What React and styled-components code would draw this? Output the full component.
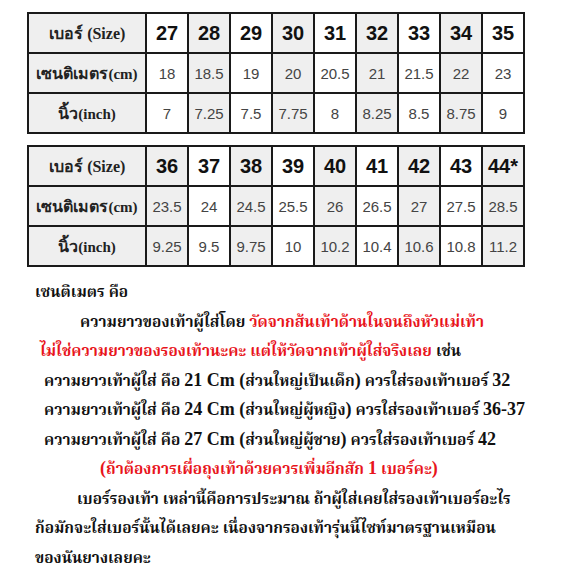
import React from "react";
import styled, { createGlobalStyle } from "styled-components";

const Global = createGlobalStyle`
  html, body { margin: 0; padding: 0; background: #fff; }
  body { width: 570px; height: 570px; overflow: hidden; }
`;

const Page = styled.div`
  padding: 12px 0 0 27px;
  display: flex;
  flex-direction: column;
`;

const Table = styled.table`
  width: 498px;
  border-collapse: collapse;
  table-layout: fixed;
  border: 2px solid #1a1a1a;
  margin-bottom: ${(p) => p.$gap || 0}px;
`;

const Row = styled.tr`
  height: 40px;
`;

const Cell = styled.td`
  border: 2px solid #1a1a1a;
  background: ${(p) => (p.$shade ? "#efefef" : "#ffffff")};
  text-align: center;
  padding: 0;
  color: #444;
  font-family: "Liberation Sans", Arial, sans-serif;
  font-size: 15px;
`;

const HeadCell = styled(Cell)`
  color: #111;
  font-weight: bold;
  font-size: 20px;
`;

const Label = styled(Cell)`
  background: #efefef;
  color: #222;
  font-weight: bold;
  font-size: 16px;
  font-family: "Liberation Sans", Tahoma, sans-serif;
  white-space: nowrap;
`;

const Latin = styled.span`
  font-family: "Liberation Serif", serif;
  font-size: ${(p) => p.$size || 15}px;
`;

const Text = styled.div`
  margin-top: 12px;
  font-family: "Noto Serif Thai", "Norasi", "Tlwg Typo", "Liberation Serif", "Times New Roman", serif;
  font-weight: bold;
  font-size: 15.4px;
  color: #111;
`;

const Line = styled.div`
  height: 29.5px;
  line-height: 29.5px;
  padding-left: ${(p) => p.$indent || 0}px;
  white-space: nowrap;
`;

const Roman = styled.span`
  font-family: "Liberation Serif", "Times New Roman", serif;
  font-size: 18px;
  line-height: 1;
`;

const Red = styled.span`
  color: #e8141b;
`;

const tables = [
  {
    sizes: ["27", "28", "29", "30", "31", "32", "33", "34", "35"],
    cm: ["18", "18.5", "19", "20", "20.5", "21", "21.5", "22", "23"],
    inch: ["7", "7.25", "7.5", "7.75", "8", "8.25", "8.5", "8.75", "9"],
    shade: (i) => i % 2 === 1,
  },
  {
    sizes: ["36", "37", "38", "39", "40", "41", "42", "43", "44*"],
    cm: ["23.5", "24", "24.5", "25.5", "26", "26.5", "27", "27.5", "28.5"],
    inch: ["9.25", "9.5", "9.75", "10", "10.2", "10.4", "10.6", "10.8", "11.2"],
    shade: (i) => i % 2 === 0,
  },
];

function SizeTable({ data, gap }) {
  return (
    <Table $gap={gap}>
      <colgroup>
        <col style={{ width: 118 }} />
        {data.sizes.map((s) => (
          <col key={s} />
        ))}
      </colgroup>
      <tbody>
        <Row>
          <Label>
            เบอร์ <Latin $size={16}>(Size)</Latin>
          </Label>
          {data.sizes.map((s, i) => (
            <HeadCell key={s} $shade={data.shade(i)}>
              {s}
            </HeadCell>
          ))}
        </Row>
        <Row>
          <Label>
            เซนติเมตร<Latin $size={15}>(cm)</Latin>
          </Label>
          {data.cm.map((s, i) => (
            <Cell key={i} $shade={data.shade(i)}>
              {s}
            </Cell>
          ))}
        </Row>
        <Row>
          <Label>
            นิ้ว<Latin $size={15}>(inch)</Latin>
          </Label>
          {data.inch.map((s, i) => (
            <Cell key={i} $shade={data.shade(i)}>
              {s}
            </Cell>
          ))}
        </Row>
      </tbody>
    </Table>
  );
}

export default function App() {
  return (
    <>
      <Global />
      <Page>
        <SizeTable data={tables[0]} gap={11} />
        <SizeTable data={tables[1]} />
        <Text>
          <Line $indent={8}>เซนติเมตร คือ</Line>
          <Line $indent={53}>
            ความยาวของเท้าผู้ใส่โดย <Red>วัดจากส้นเท้าด้านในจนถึงหัวแม่เท้า</Red>
          </Line>
          <Line $indent={13}>
            <Red>ไม่ใช่ความยาวของรองเท้านะคะ แต่ให้วัดจากเท้าผู้ใส่จริงเลย</Red> เช่น
          </Line>
          <Line $indent={17}>
            ความยาวเท้าผู้ใส่ คือ <Roman>21 Cm (</Roman>ส่วนใหญ่เป็นเด็ก<Roman>)</Roman> ควรใส่รองเท้าเบอร์ <Roman>32</Roman>
          </Line>
          <Line $indent={17}>
            ความยาวเท้าผู้ใส่ คือ <Roman>24 Cm (</Roman>ส่วนใหญ่ผู้หญิง<Roman>)</Roman> ควรใส่รองเท้าเบอร์ <Roman>36-37</Roman>
          </Line>
          <Line $indent={17}>
            ความยาวเท้าผู้ใส่ คือ <Roman>27 Cm (</Roman>ส่วนใหญ่ผู้ชาย<Roman>)</Roman> ควรใส่รองเท้าเบอร์ <Roman>42</Roman>
          </Line>
          <Line $indent={73}>
            <Red>
              <Roman>(</Roman>ถ้าต้องการเผื่อถุงเท้าด้วยควรเพิ่มอีกสัก <Roman>1</Roman> เบอร์คะ<Roman>)</Roman>
            </Red>
          </Line>
          <Line $indent={50}>
            เบอร์รองเท้า เหล่านี้คือการประมาณ ถ้าผู้ใส่เคยใส่รองเท้าเบอร์อะไร
          </Line>
          <Line $indent={8}>
            ก้อมักจะใส่เบอร์นั้นได้เลยคะ เนื่องจากรองเท้ารุ่นนี้ไซท์มาตรฐานเหมือน
          </Line>
          <Line $indent={8}>ของนันยางเลยคะ</Line>
        </Text>
      </Page>
    </>
  );
}
